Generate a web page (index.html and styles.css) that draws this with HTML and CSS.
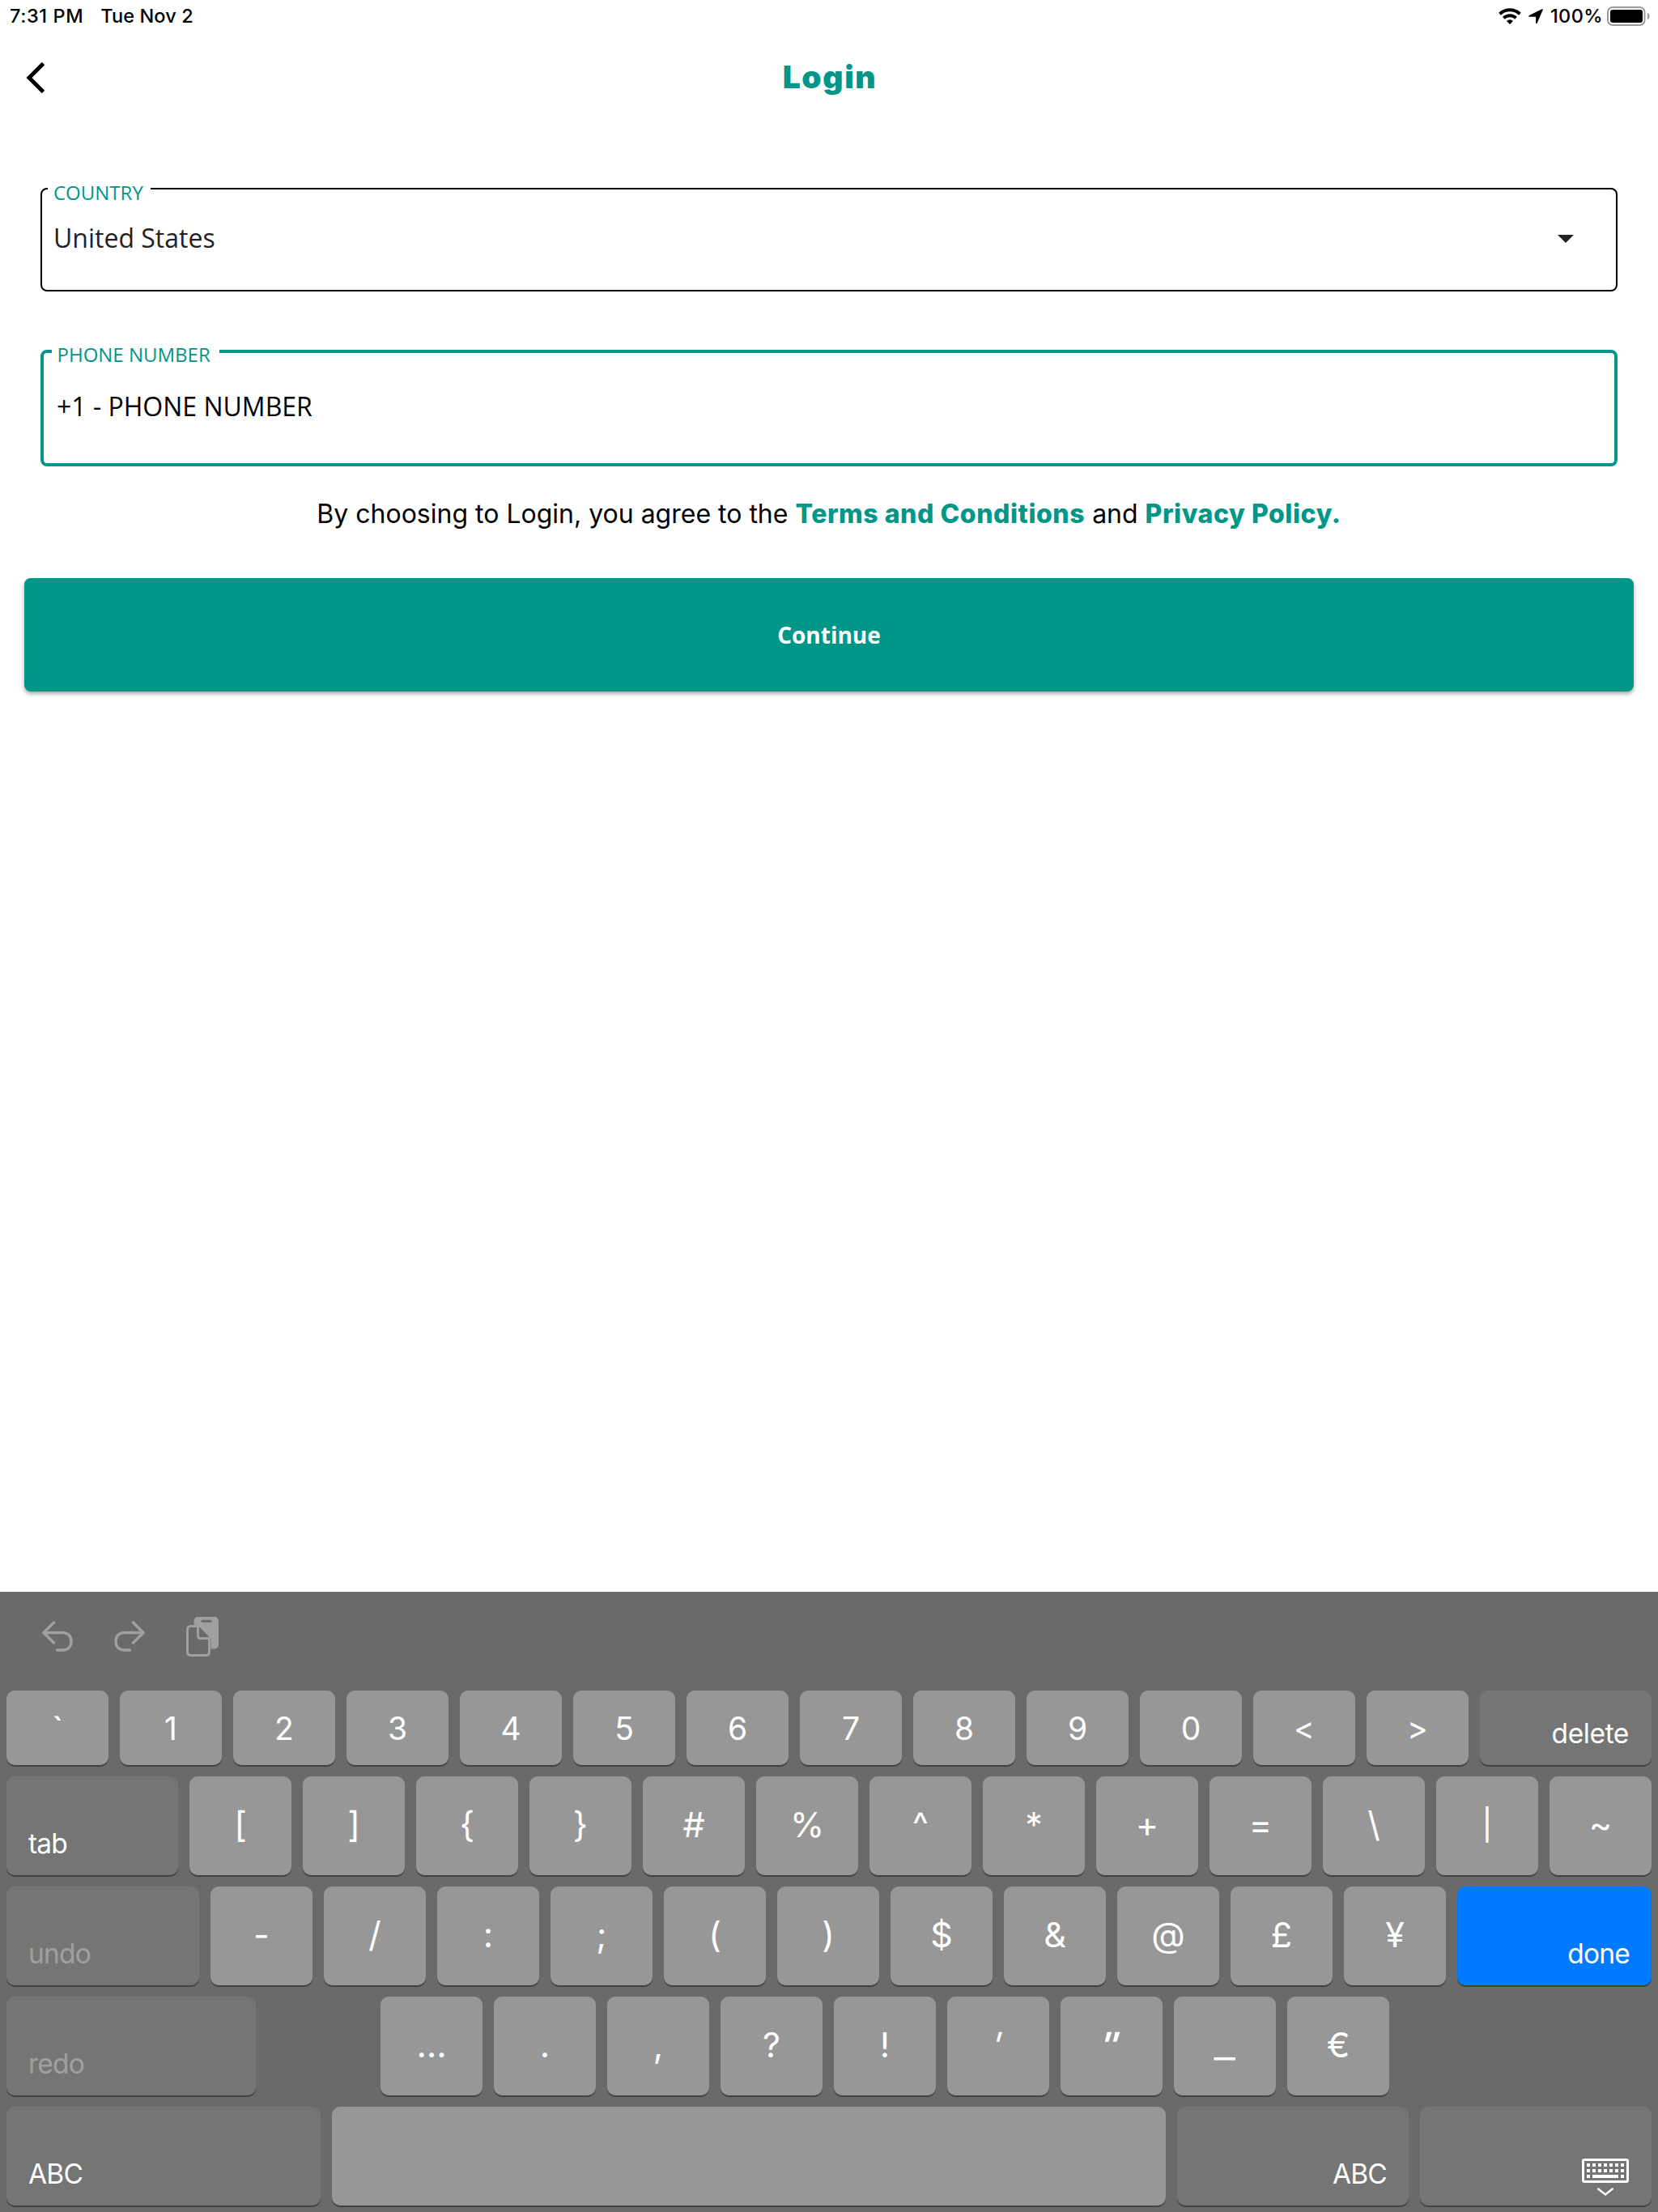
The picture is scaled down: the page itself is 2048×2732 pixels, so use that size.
FILE: index.html
```html
<!DOCTYPE html>
<html lang="en">
<head>
<meta charset="utf-8">
<title>Login</title>
<link rel="stylesheet" href="styles.css">
</head>
<body>
<div class="screen">
  <header class="status">
    <span class="time">7:31 PM</span>
    <span class="date">Tue Nov 2</span>
    <svg class="wifi" width="28" height="22" viewBox="0 0 28 22"><g fill="none" stroke="#000" stroke-width="4"><path d="M1.600 8.200a18 18 0 0 1 24.800 0"/><path d="M6.400 13.200a11 11 0 0 1 15.200 0"/></g><path d="M10 16.900a6 6 0 0 1 8 0L14 21z"/></svg>
    <svg class="loc" width="20" height="20" viewBox="0 0 20 20"><path d="M17.600 1.200c.9-.4 1.500.2 1.100 1.100l-7 16.200c-.4.9-1.600.7-1.600-.3V10.700H2.200c-1 0-1.200-1.200-.3-1.600z"/></svg>
    <span class="pct">100%</span>
    <svg class="battery" width="54" height="24" viewBox="0 0 54 24"><rect x="1" y="1" width="45.500" height="22" rx="6" fill="none" stroke="#999" stroke-width="2"/><rect x="4" y="4" width="40" height="16" rx="3"/><path d="M50 8c3.300 1 3.300 7 0 8z" fill="#999"/></svg>
  </header>
  <nav class="bar">
    <svg class="back" width="40" height="48" viewBox="0 0 40 48"><path d="M29.500 6.500 12 24l17.500 17.500" fill="none" stroke="#000" stroke-width="5"/></svg>
    <h1>Login</h1>
  </nav>
  <main class="form">
    <div class="field country"><span class="label">COUNTRY</span><span class="value">United States</span><svg width="20" height="10" viewBox="0 0 20 10"><path d="M0 0h20L10 10z" fill="#222"/></svg></div>
    <div class="field phone"><span class="label">PHONE NUMBER</span><span class="value">+1 - PHONE NUMBER</span></div>
    <p class="terms">By choosing to Login, you agree to the <b>Terms and Conditions</b> and <b>Privacy Policy.</b></p>
    <button class="continue">Continue</button>
  </main>
  <section class="keyboard">
    <div class="tools">
      <svg width="38" height="38" viewBox="0 0 38 38"><path d="M14.500 2 2 14.500 14.500 27M2.500 14.500H25c7 0 11 4.500 11 10.800S32 36 25 36h-6.500"/></svg>
      <svg width="38" height="38" viewBox="0 0 38 38"><path d="M23.500 2 36 14.500 23.500 27M35.500 14.500H13C6 14.500 2 19 2 25.300S6 36 13 36h6.500"/></svg>
      <svg class="paste" width="40" height="50" viewBox="0 0 40 50"><path class="solid" d="M9.500 9.500V5a5 5 0 0 1 5-5H35a5 5 0 0 1 5 5v29.500a5 5 0 0 1-5 5h-4.500V27L14 10z"/><path class="slot" d="M20 5.200h10"/><path d="M15 11.500H5.500a4 4 0 0 0-4 4V43.500a4 4 0 0 0 4 4h19a4 4 0 0 0 4-4V26.500H17.500a3 3 0 0 1-3-3V12"/></svg>
    </div>
    <div class="row short">
      <kbd><i class="grave">`</i></kbd><kbd>1</kbd><kbd>2</kbd><kbd>3</kbd><kbd>4</kbd><kbd>5</kbd><kbd>6</kbd><kbd>7</kbd><kbd>8</kbd><kbd>9</kbd><kbd>0</kbd><kbd>&lt;</kbd><kbd>&gt;</kbd><kbd class="fn right grow delete">delete</kbd>
    </div>
    <div class="row">
      <kbd class="fn grow">tab</kbd><kbd>[</kbd><kbd>]</kbd><kbd>{</kbd><kbd>}</kbd><kbd>#</kbd><kbd>%</kbd><kbd>^</kbd><kbd>*</kbd><kbd>+</kbd><kbd>=</kbd><kbd>\</kbd><kbd><i class="pipe">|</i></kbd><kbd>~</kbd>
    </div>
    <div class="row">
      <kbd class="fn off undo">undo</kbd><kbd>-</kbd><kbd>/</kbd><kbd>:</kbd><kbd>;</kbd><kbd>(</kbd><kbd>)</kbd><kbd>$</kbd><kbd>&amp;</kbd><kbd>@</kbd><kbd>£</kbd><kbd>¥</kbd><kbd class="fn right grow done">done</kbd>
    </div>
    <div class="row">
      <kbd class="fn off redo">redo</kbd><kbd>…</kbd><kbd>.</kbd><kbd>,</kbd><kbd>?</kbd><kbd>!</kbd><kbd><i class="quote">'</i></kbd><kbd><i class="quote double">"</i></kbd><kbd><i class="underscore">_</i></kbd><kbd>€</kbd>
    </div>
    <div class="row">
      <kbd class="fn abc">ABC</kbd><kbd class="grow"></kbd><kbd class="fn right side">ABC</kbd><kbd class="fn right side hide"><svg width="58" height="48" viewBox="0 0 58 48"><rect x="1.500" y="1.500" width="55" height="27" rx="1.500" fill="none" stroke="#fff" stroke-width="3"/><g fill="none" stroke="#fff" stroke-width="4"><path d="M6 8h46M6 15h46" stroke-dasharray="4 3"/><path d="M6 22h4M13 22h32M48 22h4"/></g><path d="m20.200 37.500 8.800 7 8.800-7" fill="none" stroke="#fff" stroke-width="2.500" stroke-linecap="round"/></svg></kbd>
    </div>
  </section>
</div>
</body>
</html>
```
FILE: styles.css
```css
* { box-sizing: border-box; }
body { margin: 0; background: #fff; color: #000; font-family: Inter, sans-serif; }
svg { display: block; flex: none; }
.screen { width: 2048px; height: 2732px; display: flex; flex-direction: column; overflow: hidden; }

.status { height: 40px; display: flex; align-items: center; padding: 0 9px 0 12px; font-size: 23.5px; font-weight: 500; line-height: 38px; white-space: nowrap; }
.time { letter-spacing: .6px; }
.date { margin-left: 21px; letter-spacing: .1px; }
.pct { letter-spacing: .4px; }
.wifi { margin-left: auto; }
.loc { margin-left: 8px; margin-right: 8px; }
.battery { margin-left: 5px; }

.bar { height: 112px; display: grid; grid-template-columns: 100px 1fr 100px; align-items: center; }
.back { margin-left: 24px; }
h1 { margin: 0; padding: 0 0 2px 2px; text-align: center; color: #009688; font-size: 39px; font-weight: 900; line-height: 48px; letter-spacing: 1.6px; }

.form { flex: 1; padding: 80px 30px 0; }
.field { position: relative; margin: 0 20px; border: 2px solid #000; border-radius: 8px; font-family: "Open Sans", sans-serif; display: flex; justify-content: space-between; }
.label { position: absolute; background: #fff; color: #009688; font-size: 24px; line-height: 30px; white-space: nowrap; }
.value { font-size: 32px; line-height: 44px; }
.country { height: 128px; padding: 38px 52px 0 14px; }
.country .label { left: 7px; top: -11px; width: 127px; padding-left: 7px; }
.country .value { color: #222; }
.country svg { margin-top: 18px; }
.phone { height: 144px; margin-top: 72px; border: 4px solid #009688; padding: 44px 16px; }
.phone .label { left: 10px; top: -13px; width: 207px; padding-left: 6.500px; }
.terms { margin: 36px 0 0; text-align: center; font-size: 32px; line-height: 46px; white-space: nowrap; }
.terms b { color: #009688; font-weight: 800; letter-spacing: .55px; }
.continue { display: block; width: 100%; height: 140px; margin-top: 56px; border: 0; border-radius: 8px; background: #009688; color: #fff; font: 700 28px/40px "Open Sans", sans-serif; box-shadow: 0 3px 5px rgba(0, 0, 0, .35); }

.keyboard { height: 766px; background: #6a6a6a; padding: 0 8px 8px; display: flex; flex-direction: column; gap: 14px; }
.tools { height: 108px; display: flex; align-items: flex-start; padding: 36px 0 0 44px; gap: 51px; }
.tools svg { fill: none; stroke: #a0a0a0; stroke-width: 3.5; stroke-linecap: round; stroke-linejoin: round; }
.tools .paste { margin-top: -5px; stroke-width: 3; }
.paste .solid { fill: #a0a0a0; stroke: none; }
.paste .slot { stroke: #6a6a6a; }
.row { height: 122px; display: flex; gap: 14px; }
.short { height: 92px; }
kbd { width: 126px; flex: none; display: flex; align-items: center; justify-content: center; padding-bottom: 4px; border-radius: 10px; background: #979797; box-shadow: 0 2px 0 #434343; color: #fff; font: 400 43px/52px Inter, sans-serif; }
.short kbd { font-size: 39px; padding-top: 2px; padding-bottom: 0; }
kbd i { font-style: normal; }
.grave { transform: scaleX(1.3); }
.quote { transform: skewX(-16deg); margin-left: -3px; }
.double { transform: skewX(-16deg) scaleX(1.4); }
.underscore { transform: scaleX(1.35); }
.pipe { transform: scaleY(.87); }
.row .fn { background: #757575; justify-content: flex-start; align-items: flex-end; padding: 0 27px 22px; font-size: 33.5px; line-height: 34px; letter-spacing: -.8px; }
.row .delete { letter-spacing: -.4px; padding-right: 28px; }
.row .right { justify-content: flex-end; }
.row .grow { flex: 1; }
.row .off { color: #a0a0a0; }
.row .undo { width: 238px; }
.row .redo { width: 308px; margin-right: 140px; }
.row .abc { width: 388px; }
.row .side { width: 286px; }
.row .done { background: #007aff; }
.row .hide { padding-bottom: 10px; padding-right: 28px; }
```
